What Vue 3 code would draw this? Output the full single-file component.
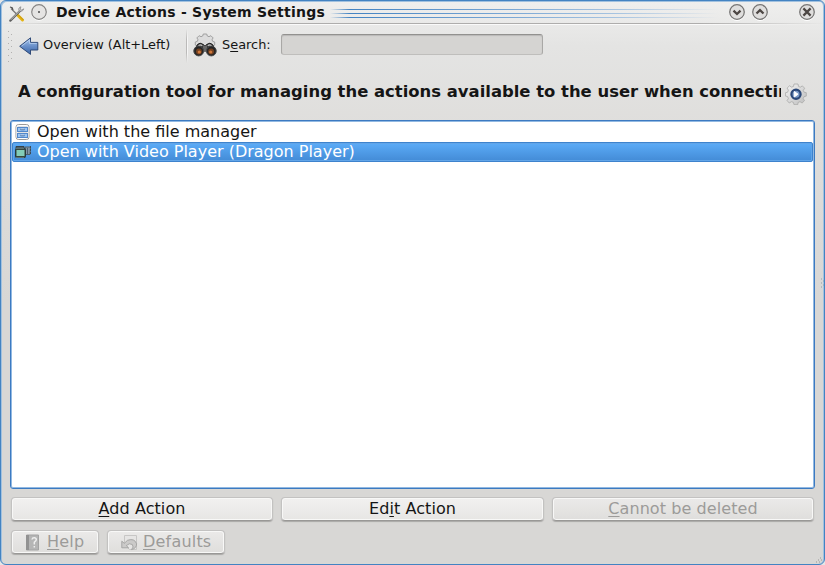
<script setup>
const actions = [
  { label: 'Open with the file manager', icon: 'cabinet', selected: false },
  { label: 'Open with Video Player (Dragon Player)', icon: 'video', selected: true },
]
</script>

<template>
  <div class="window">
    <header class="titlebar">
      <svg class="tools" width="18" height="18" viewBox="0 0 18 18">
        <path d="M3 3.500 10 10.500" stroke="#777" stroke-width="1.300" />
        <path d="M2 2l2.200.8.8 2.200" stroke="#555" stroke-width="1.200" fill="none" />
        <path d="M9.500 10 14.500 15" stroke="#e5b414" stroke-width="3" stroke-linecap="round" />
        <path d="M10.500 10 15.500 15" stroke="#b58810" stroke-width=".7" />
        <path d="M2.300 15.600 12.200 5.700" stroke="#5f5f5f" stroke-width="2.200" stroke-linecap="round" />
        <path d="M2.800 14.800 12.200 5.400" stroke="#d5d5d5" stroke-width=".9" />
        <path d="M13 1.800c-2 .3-3 2.300-1.800 4 1.700 1.200 4.300.2 4.500-2L13.600 5 12.200 4z" fill="#c8c8c8" stroke="#777" stroke-width=".6" />
      </svg>
      <svg class="round" width="18" height="18" viewBox="0 0 18 18">
        <circle cx="9" cy="9.800" r="7.500" fill="none" stroke="#fff" stroke-width="1" />
        <circle cx="9" cy="9" r="7.300" fill="#e5e4e3" stroke="#858483" stroke-width="1.200" />
        <circle cx="9" cy="9" r="1.100" fill="#555" />
      </svg>
      <h1>Device Actions - System Settings</h1>
      <div class="stripes"><i /><i /><i /></div>
      <div class="controls">
        <svg width="18" height="18" viewBox="0 0 18 18">
          <circle cx="9" cy="9.900" r="7.600" fill="none" stroke="#fff" />
          <circle cx="9" cy="9" r="7.300" fill="#dfdedd" stroke="#777675" stroke-width="1.300" />
          <path d="M5.500 7.700 9 11 12.500 7.700" fill="none" stroke="#4c4643" stroke-width="2.300" />
        </svg>
        <svg width="18" height="18" viewBox="0 0 18 18">
          <circle cx="9" cy="9.900" r="7.600" fill="none" stroke="#fff" />
          <circle cx="9" cy="9" r="7.300" fill="#dfdedd" stroke="#777675" stroke-width="1.300" />
          <path d="M5.500 10.500 9 7.200 12.500 10.500" fill="none" stroke="#4c4643" stroke-width="2.300" />
        </svg>
        <svg class="close" width="18" height="18" viewBox="0 0 18 18">
          <circle cx="9" cy="9.900" r="7.600" fill="none" stroke="#fff" />
          <circle cx="9" cy="9" r="7.300" fill="#dfdedd" stroke="#777675" stroke-width="1.300" />
          <path d="M5.400 5.400 12.600 12.600M12.600 5.400 5.400 12.600" stroke="#4c4643" stroke-width="2.200" />
        </svg>
      </div>
    </header>
    <div class="rule" />

    <nav class="toolbar">
      <svg class="grip" width="6" height="34" viewBox="0 0 6 34">
        <g fill="#b2b1b0">
          <rect v-for="n in 6" :key="n" x="0" :y="n * 6 - 5" width="1" height="1" />
          <rect v-for="n in 5" :key="'b' + n" x="3" :y="n * 6 - 2" width="1" height="1" />
        </g>
      </svg>
      <svg class="back" width="20" height="18" viewBox="0 0 20 18">
        <defs>
          <linearGradient id="arrow" x2="0" y2="1">
            <stop stop-color="#a9c7ee" /><stop offset=".5" stop-color="#6b91ca" /><stop offset="1" stop-color="#3a64a5" />
          </linearGradient>
        </defs>
        <path d="M.7 9.300 11.500.8V5.400H18.800V13H11.500V17.400z" fill="url(#arrow)" stroke="#2f4a78" stroke-linejoin="round" />
        <path d="M2.700 9 10.600 2.900V6.400H17.700" fill="none" stroke="#c1d7f3" stroke-width=".7" />
      </svg>
      <span class="overview">Overview (Alt+Left)</span>
      <div class="divider" />
      <svg class="binoculars" width="24" height="24" viewBox="0 0 24 24">
        <path d="M10.300 1h3.400l.6 2 1.700.7 1.900-1 2.200 2.200-1.100 1.900.7 1.600 2 .6v3L18 14H6l-3.700-2V9l2-.6L5 6.800 3.900 4.900 6.100 2.700l1.900 1 1.700-.7z" fill="#dcdcdc" stroke="#a0a0a0" />
        <path d="M1.200 18 4.500 11.500Q7 9 10.300 11.500L12 13 13.700 11.500Q17 9 19.500 11.500L22.800 18z" fill="#3b3b3b" stroke="#1b1b1b" />
        <path d="M5.200 13.500Q7 11 9.300 12.700M14.700 12.700Q17 11 18.800 13.500" fill="none" stroke="#bbb" stroke-width="1.400" />
        <rect x="10" y="12.500" width="4" height="6" fill="#666" />
        <circle cx="5.700" cy="18" r="4.900" fill="#262626" stroke="#4a4a4a" />
        <circle cx="18.300" cy="18" r="4.900" fill="#262626" stroke="#4a4a4a" />
        <circle cx="5.900" cy="18.500" r="2.900" fill="#74401f" />
        <circle cx="18.100" cy="18.500" r="2.900" fill="#74401f" />
        <circle cx="6.300" cy="19" r="1.600" fill="#d0773a" />
        <circle cx="17.700" cy="19" r="1.600" fill="#d0773a" />
      </svg>
      <label class="search" for="search">S<u>e</u>arch:</label>
      <input id="search" type="text">
    </nav>

    <section class="heading">
      <h2>A configuration tool for managing the actions available to the user when connecting</h2>
      <svg class="gear" width="22" height="22" viewBox="0 0 22 22">
        <defs>
          <linearGradient id="metal" x2="1" y2="1">
            <stop stop-color="#f4f4f4" /><stop offset="1" stop-color="#bdbdbd" />
          </linearGradient>
        </defs>
        <path d="M9 1h4l.5 2.400 1.800.8 2.100-1.300 2.200 2.300-1.300 2.300.7 1.700 2.300.5v3.400l-2.300.6-.8 1.900 1.300 2.100-2.400 2.300-2.100-1.300-1.800.7-.5 2.300H9l-.6-2.300-1.900-.8-2.200 1.400-2.200-2.400 1.300-2.100-.8-1.900L.4 13V9.800l2.200-.6.8-2L2.100 5.100l2.400-2.300 2.100 1.300 1.900-.7z" fill="url(#metal)" stroke="#aaa9a8" stroke-width=".8" />
        <circle cx="11" cy="11.200" r="4.600" fill="#7b9bc9" stroke="#2b4878" stroke-width="2.200" />
        <path d="M9.300 8.500l3.800 2.700-3.800 2.700z" fill="#fff" stroke="#fff" stroke-linejoin="round" />
      </svg>
    </section>

    <ul class="list">
      <li v-for="action in actions" :key="action.label" :class="{ selected: action.selected }">
        <svg v-if="action.icon === 'cabinet'" width="16" height="16" viewBox="0 0 16 16">
          <rect x="1" y=".5" width="13" height="15" rx="2.500" fill="#e1e1e1" stroke="#999" />
          <rect x="2" y="1.500" width="11" height="13" rx="1.500" fill="none" stroke="#fff" />
          <rect x="2.500" y="3.500" width="10" height="4" fill="#9bc5f3" stroke="#5288cb" />
          <rect x="2.500" y="9.500" width="10" height="4" fill="#9bc5f3" stroke="#5288cb" />
          <path d="M5.500 5.500h4M5.500 11.500h4" stroke="#2f5e9c" stroke-width="1.400" />
          <path d="M6 5h3M6 11h3" stroke="#fff" stroke-width=".7" />
        </svg>
        <svg v-else width="17" height="16" viewBox="0 0 17 16">
          <path d="M1 2.500h8v2H1z" fill="#51636b" stroke="#35434a" />
          <path d="M10 3h5.500l-.5 7.500h-5z" fill="#8296a6" stroke="#4c5d69" />
          <path d="M12.500 4v6.500" stroke="#4b6072" />
          <path d="M15.500 2v9" stroke="#3d4c56" stroke-dasharray="2 1" />
          <rect x=".5" y="4.500" width="10" height="9" rx="1" fill="#354640" stroke="#273b3a" />
          <rect x="1.500" y="6" width="8" height="6" fill="#83cdb7" />
          <path d="M1.500 4.500h8M1.500 13.500h8" stroke="#93aaa6" stroke-dasharray="1 1" />
        </svg>
        <span>{{ action.label }}</span>
      </li>
    </ul>

    <div class="actions">
      <button><span><u>A</u>dd Action</span></button>
      <button><span>Ed<u>i</u>t Action</span></button>
      <button disabled><span><u>C</u>annot be deleted</span></button>
    </div>

    <footer class="footer">
      <button class="help" disabled>
        <svg width="16" height="17" viewBox="0 0 16 17">
          <path d="M1.500 1h12v15h-12z" fill="#b5b5b5" stroke="#a3a3a3" />
          <path d="M1 1h3v15H1z" fill="#929292" />
          <path d="M7 5.500Q7.300 3.500 9.500 3.700Q12 4.200 11 6.500L9.300 8.300V10.500M9.300 12v1.500" fill="none" stroke="#eee" stroke-width="1.500" />
        </svg>
        <span><u>H</u>elp</span>
      </button>
      <button class="defaults" disabled>
        <svg width="17" height="17" viewBox="0 0 17 17">
          <path d="M3.500 1.500h12v14h-7l-5-5z" fill="#e6e5e4" stroke="#c7c6c5" />
          <path d="M.8 7.200V13.800H7.600L5.300 11.600Q8.500 8.500 11.300 10.500Q13.300 13 10.500 15.600Q15.800 14.200 15.600 9.800Q13.500 3.800 6.500 6.300L3.300 9.300z" fill="#cbcac9" stroke="#a2a1a0" stroke-width=".9" stroke-linejoin="round" />
        </svg>
        <span><u>D</u>efaults</span>
      </button>
    </footer>
    <svg class="edge-grip" width="3" height="12" viewBox="0 0 3 12">
      <path d="M0 1h1M2 3h1M0 5h1M2 7h1M0 9h1" stroke="#929da6" />
    </svg>
    <svg class="corner-grip" width="7" height="7" viewBox="0 0 7 7">
      <path d="M4 1h1M2 3h1M5 3h1M0 5h1M3 5h1" stroke="#969594" />
    </svg>
  </div>
</template>

<style>
body { margin: 0; background: #e6e6e6; }
</style>

<style scoped>
* { box-sizing: border-box; }
.window {
  position: relative;
  width: 825px;
  height: 565px;
  border: 1px solid #4383c2;
  border-radius: 6px;
  box-shadow: inset 1px 1px #a1c1df, inset -1px 0 #a1c1df;
  background: linear-gradient(#efefee 0, #e4e4e3 45px, #dfdedc 125px, #d8d7d5 300px, #d8d7d5);
  overflow: hidden;
  font-family: "DejaVu Sans", sans-serif;
  color: #151515;
}
svg { display: block; flex-shrink: 0; }
u { text-decoration: underline; text-decoration-thickness: 1px; text-underline-offset: 2px; }
.titlebar { display: flex; align-items: center; height: 22px; padding-left: 7px; }
.tools { margin-top: 3px; }
.round { margin: 0 0 0 4px; }
h1 { margin: -1px 0 0 8px; font-size: 14px; letter-spacing: .25px; line-height: 20px; white-space: nowrap; width: 269px; flex-shrink: 0; }
.stripes { display: grid; gap: 3px; width: 388px; margin-left: 5px; padding-top: 2px; }
.stripes i { height: 1px; background: linear-gradient(90deg, transparent, #4383c2 5%, #78a6d4 45%, #a9c5e1 75%, transparent); }
.controls { display: flex; gap: 5px; margin: 0 0 0 10px; }
.close { margin-left: 24px; }
.rule { height: 2px; background: linear-gradient(#aeadac 50%, #fafafa 50%); mask-image: linear-gradient(90deg, transparent, #000 15%, #000 85%, transparent); }
.toolbar { display: flex; align-items: center; height: 41px; padding-left: 7px; }
.grip { margin-top: 2px; }
.back { margin: 1px 0 0 5px; }
.overview { width: 128px; margin: -1px 0 0 4px; font-size: 12.900px; line-height: 16px; white-space: nowrap; }
.divider { width: 2px; height: 34px; margin: 0 0 0 15px; background: linear-gradient(90deg, #bbbab9 50%, #f6f6f6 50%); mask-image: linear-gradient(transparent, #000 30%, #000 70%, transparent); }
.binoculars { margin: -1px 0 0 5px; }
.search { width: 50px; margin: -2px 0 0 5px; font-size: 12.900px; line-height: 16px; }
input { width: 262px; height: 21px; margin: -2px 0 0 9px; border: 1px solid #a9a8a6; border-top-color: #92918f; border-bottom-color: #bfbebc; border-radius: 3px; background: #d5d4d2; box-shadow: inset 0 1px 1px #bab9b7; }
.heading { display: flex; align-items: center; height: 55px; padding: 0 17px; }
h2 { width: 763px; margin: -4px 0 0; overflow: hidden; white-space: nowrap; font-size: 16.430px; line-height: 24px; }
.gear { margin: 0 0 0 4px; }
.list { width: 805px; height: 369px; margin: -1px 0 0 9px; padding: 1px 1px; border: 1px solid #3c7ac1; box-shadow: inset 0 0 0 1px #92b9e2; border-radius: 3px; background: #fff; list-style: none; }
li { display: flex; align-items: center; height: 20px; padding-left: 3px; font-size: 16px; line-height: 20px; white-space: nowrap; }
li svg + span { margin-left: 6px; }
li.selected { color: #fff; border: 1px solid #3e83cd; border-radius: 2px; padding-left: 2px; background: linear-gradient(#5cacf8, #438bd6); box-shadow: inset 0 0 0 1px #62a5e8; }
li.selected svg + span { margin-left: 5px; }
.actions { display: grid; grid-template-columns: 262px 263px 262px; gap: 8px; margin: 8px 0 0 10px; }
button { display: flex; justify-content: center; align-items: center; height: 24px; padding: 0; border: 1px solid #c3c2c1; border-bottom-color: #999896; border-radius: 4px; background: linear-gradient(#f2f1f0, #e7e6e4); box-shadow: inset 0 0 0 1px #f8f8f7, 0 1px 1px #aaa9a7; color: #151515; font: 16px/20px "DejaVu Sans", sans-serif; }
button:disabled { color: #9c9b99; background: linear-gradient(#ebeae9, #dfdedc); }
.actions button { letter-spacing: .08px; }
.footer { display: flex; gap: 8px; margin: 9px 0 0 10px; }
.footer button { justify-content: flex-start; padding-left: 13px; }
.help { width: 88px; gap: 6px; }
.defaults { width: 118px; gap: 5px; }
.footer span { letter-spacing: .2px; }
.edge-grip { position: absolute; right: 0; top: 277px; }
.corner-grip { position: absolute; right: 1px; bottom: 0; }
</style>
